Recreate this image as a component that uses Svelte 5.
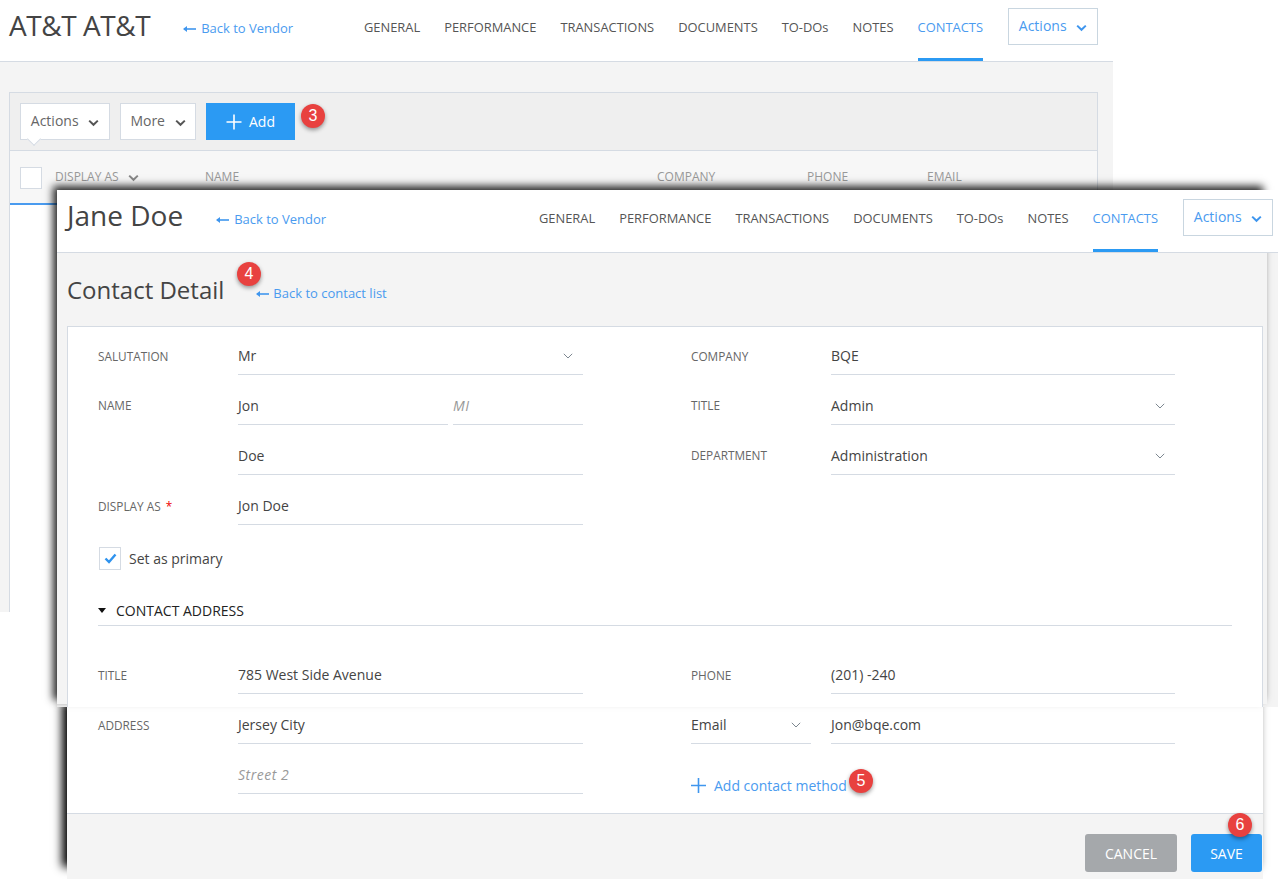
<script lang="ts">
  const tabs = ['General', 'Performance', 'Transactions', 'Documents', 'To-Dos', 'Notes', 'Contacts'];
</script>

{#snippet arrow()}
  <svg class="arrow" width="13" height="8" viewBox="0 0 13 8">
    <path d="M1 4h12" stroke="#3f96ee" stroke-width="1.6" fill="none" />
    <path d="M0 4l4-3v6z" fill="#3f96ee" />
  </svg>
{/snippet}

{#snippet chev(color = '#555')}
  <svg class="chev" width="11" height="8" viewBox="0 0 11 8">
    <path d="M1.2 1.6l4.3 4.2 4.3-4.2" stroke={color} stroke-width="2" fill="none" />
  </svg>
{/snippet}

{#snippet caret()}
  <svg class="caret" width="10" height="6" viewBox="0 0 10 6">
    <path d="M.8 .8l4.2 4.2 4.2-4.2" stroke="#7d8790" stroke-width="1" fill="none" />
  </svg>
{/snippet}

{#snippet header(title: string)}
  <header class="head">
    <h1>{title}</h1>
    <a class="back">{@render arrow()}Back to Vendor</a>
    <nav>
      {#each tabs as tab}
        <span class="tab" class:on={tab === 'Contacts'}>{tab === 'To-Dos' ? 'TO-DOs' : tab.toUpperCase()}</span>
      {/each}
    </nav>
    <button class="btn-actions">Actions {@render chev('#3f96ee')}</button>
  </header>
{/snippet}

{#snippet field(value: string, opts: { select?: boolean; hint?: boolean } = {})}
  <div class="field" class:hint={opts.hint}>
    <span>{value}</span>
    {#if opts.select}{@render caret()}{/if}
  </div>
{/snippet}

<main class="canvas">
  <section class="win-back">
    {@render header('AT&T AT&T')}
    <div class="list">
      <div class="toolbar">
        <button class="tool with-tip">Actions {@render chev()}</button>
        <button class="tool more">More {@render chev()}</button>
        <button class="add">
          <svg width="16" height="16" viewBox="0 0 16 16"><path d="M8 .5v15M.5 8h15" stroke="#fff" stroke-width="1.6" /></svg>
          Add
        </button>
        <span class="badge b3">3</span>
      </div>
      <div class="thead">
        <span class="box"></span>
        <span class="th c1">DISPLAY AS {@render chev('#888')}</span>
        <span class="th c2">NAME</span>
        <span class="th c3">COMPANY</span>
        <span class="th c4">PHONE</span>
        <span class="th c5">EMAIL</span>
      </div>
      <div class="active-line"></div>
    </div>
  </section>

  <section class="win-front">
    {@render header('Jane Doe')}
    <div class="title-row">
      <h2>Contact Detail</h2>
      <a class="back small">{@render arrow()}Back to contact list</a>
      <span class="badge b4">4</span>
    </div>
    <div class="panel">
      <div class="cols">
        <div class="col">
          <div class="row"><span class="lab">SALUTATION</span>{@render field('Mr', { select: true })}</div>
          <div class="row">
            <span class="lab up">NAME</span>
            <div class="split">
              {@render field('Jon')}
              {@render field('MI', { hint: true })}
            </div>
          </div>
          <div class="row"><span class="lab"></span>{@render field('Doe')}</div>
          <div class="row"><span class="lab">DISPLAY AS <i>*</i></span>{@render field('Jon Doe')}</div>
        </div>
        <div class="col">
          <div class="row"><span class="lab">COMPANY</span>{@render field('BQE')}</div>
          <div class="row"><span class="lab up">TITLE</span>{@render field('Admin', { select: true })}</div>
          <div class="row"><span class="lab up">DEPARTMENT</span>{@render field('Administration', { select: true })}</div>
        </div>
      </div>
      <label class="primary">
        <span class="check">
          <svg width="13" height="11" viewBox="0 0 13 11"><path d="M1.5 5.5l3.5 3.5 6.5-7.5" stroke="#2f93ee" stroke-width="2.4" fill="none" /></svg>
        </span>
        Set as primary
      </label>
      <div class="section">
        <svg width="8" height="5" viewBox="0 0 8 5"><path d="M0 0h8L4 5z" fill="#111" /></svg>
        CONTACT ADDRESS
      </div>
      <div class="cols">
        <div class="col"><div class="row"><span class="lab">TITLE</span>{@render field('785 West Side Avenue')}</div></div>
        <div class="col"><div class="row"><span class="lab">PHONE</span>{@render field('(201) -240')}</div></div>
      </div>
    </div>
  </section>

  <section class="win-foot">
    <div class="cols lower">
      <div class="col">
        <div class="row first"><span class="lab">ADDRESS</span>{@render field('Jersey City')}</div>
        <div class="row"><span class="lab"></span>{@render field('Street 2', { hint: true })}</div>
      </div>
      <div class="col">
        <div class="row first">
          <div class="field kind"><span>Email</span>{@render caret()}</div>
          <div class="gap"></div>
          {@render field('Jon@bqe.com')}
        </div>
        <a class="add-method">
          <svg width="15" height="15" viewBox="0 0 15 15"><path d="M7.5 0v15M0 7.5h15" stroke="#3f96ee" stroke-width="1.6" /></svg>
          Add contact method
          <span class="badge b5">5</span>
        </a>
      </div>
    </div>
    <footer>
      <button class="cancel">CANCEL</button>
      <button class="save">SAVE<span class="badge b6">6</span></button>
    </footer>
  </section>
</main>

<style>
  :global(body) {
    margin: 0;
    background: #fff;
  }

  .canvas {
    position: relative;
    width: 1278px;
    height: 879px;
    overflow: hidden;
    font-family: 'Open Sans', 'Liberation Sans', sans-serif;
    color: #444;
  }

  button {
    font-family: inherit;
    cursor: pointer;
  }

  .win-back {
    position: absolute;
    left: 0;
    top: 0;
    width: 1113px;
    height: 612px;
    background: #f4f4f4;
    overflow: hidden;
  }

  .win-front {
    position: absolute;
    z-index: 2;
    left: 57px;
    top: 190px;
    width: 1221px;
    height: 517px;
    background: #f4f4f4;
  }

  .win-front::before {
    content: '';
    position: absolute;
    z-index: -1;
    inset: 0 11px 3px 0;
    box-shadow: -4px -4px 8px rgba(0, 0, 0, 0.85);
  }

  .win-foot {
    position: absolute;
    z-index: 1;
    left: 67px;
    top: 707px;
    width: 1196px;
    height: 172px;
    background: #fff;
  }

  .win-foot::before {
    content: '';
    position: absolute;
    z-index: -1;
    inset: 0 0 7px 0;
    box-shadow: -5px -5px 9px #000;
  }

  .head {
    display: flex;
    align-items: flex-start;
    box-sizing: border-box;
    height: 62px;
    padding-left: 9px;
    background: #fff;
    border-bottom: 1px solid #d5dbe3;
  }

  .win-back .head {
    padding-right: 15px;
  }

  .win-front .head {
    height: 63px;
    padding-left: 10px;
    padding-right: 5px;
  }

  h1 {
    margin: 6px 0 0;
    font-size: 28px;
    line-height: 38px;
    font-weight: 400;
    color: #444;
    white-space: nowrap;
  }

  .win-back h1 {
    letter-spacing: -0.45px;
  }

  .back {
    display: inline-flex;
    align-items: center;
    gap: 5px;
    margin: 20px 0 0 33px;
    font-size: 13px;
    line-height: 18px;
    color: #4a9bef;
  }

  .win-back .back {
    margin-top: 19px;
  }

  .arrow {
    flex: none;
    margin-top: 1px;
  }

  nav {
    display: flex;
    gap: 24px;
    margin-left: auto;
    height: 100%;
  }

  .tab {
    box-sizing: border-box;
    height: 100%;
    padding-top: 18px;
    font-size: 12.9px;
    line-height: 18px;
    color: #555;
    white-space: nowrap;
    border-bottom: 3px solid transparent;
  }

  .win-front .tab {
    padding-top: 19px;
  }

  .tab.on {
    color: #4a9bef;
    border-bottom-color: #2b9af3;
  }

  .btn-actions {
    box-sizing: border-box;
    width: 90px;
    height: 37px;
    margin: 8px 0 0 25px;
    padding: 0 0 2px;
    font-size: 14px;
    color: #4a9bef;
    background: #fff;
    border: 1px solid #c9d6e0;
  }

  .win-front .btn-actions {
    margin-top: 9px;
  }

  .chev {
    margin-left: 6px;
    vertical-align: -1px;
  }

  .list {
    box-sizing: border-box;
    width: 1089px;
    height: 560px;
    margin: 30px 0 0 9px;
    background: #fff;
    border: 1px solid #d5dbe3;
    border-bottom: 0;
  }

  .toolbar {
    display: flex;
    align-items: flex-start;
    gap: 10px;
    box-sizing: border-box;
    height: 58px;
    padding: 10px;
    background: #efefef;
    border-bottom: 1px solid #d5dbe3;
  }

  .tool {
    position: relative;
    box-sizing: border-box;
    width: 90px;
    height: 37px;
    padding: 0 0 3px;
    font-size: 14px;
    color: #666;
    background: #fff;
    border: 1px solid #d5dbe3;
  }

  .tool.more {
    width: 76px;
  }

  .with-tip::after {
    content: '';
    position: absolute;
    left: 8px;
    bottom: -5px;
    width: 9px;
    height: 9px;
    background: #fff;
    border-right: 1px solid #d5dbe3;
    border-bottom: 1px solid #d5dbe3;
    transform: rotate(45deg);
  }

  .add {
    display: inline-flex;
    align-items: center;
    justify-content: center;
    gap: 7px;
    width: 89px;
    height: 37px;
    padding: 0;
    font-size: 14px;
    color: #fff;
    background: #2b9af3;
    border: 0;
  }

  .thead {
    position: relative;
    display: flex;
    align-items: center;
    height: 52px;
    background: #f7f7f7;
  }

  .box {
    position: absolute;
    left: 10px;
    top: 16px;
    box-sizing: border-box;
    width: 22px;
    height: 22px;
    background: #fff;
    border: 1px solid #d5dbe3;
  }

  .th {
    position: absolute;
    top: 17px;
    font-size: 12px;
    line-height: 18px;
    color: #999;
    white-space: nowrap;
  }

  .c1 { left: 45px; }
  .c2 { left: 195px; }
  .c3 { left: 647px; }
  .c4 { left: 797px; }
  .c5 { left: 917px; }

  .active-line {
    height: 2px;
    background: #4a9bef;
  }

  .badge {
    position: absolute;
    box-sizing: border-box;
    width: 24px;
    height: 24px;
    font-family: 'Liberation Sans', Arial, sans-serif;
    font-size: 16px;
    line-height: 23px;
    text-align: center;
    color: #fff;
    background: #e8413f;
    border-radius: 50%;
    box-shadow: 0 2px 4px rgba(0, 0, 0, 0.4);
  }

  .b3 { left: 301px; top: 104px; }
  .b4 { left: 180px; top: 9px; }
  .b5 { left: 158px; top: -7px; }
  .b6 { left: 37px; top: -21px; }

  .title-row {
    position: relative;
    display: flex;
    align-items: flex-start;
    height: 73px;
    padding-left: 10px;
  }

  h2 {
    margin: 20px 0 0;
    font-size: 24px;
    line-height: 33px;
    font-weight: 400;
    color: #444;
  }

  .back.small {
    gap: 4px;
    margin: 31px 0 0 32px;
  }

  .panel {
    box-sizing: border-box;
    width: 1196px;
    height: 381px;
    margin-left: 10px;
    padding: 10px 30px 0;
    overflow: hidden;
    background: #fff;
    border: 1px solid #d5dbe3;
    border-bottom: 0;
  }

  .cols {
    display: grid;
    grid-template-columns: 485px 484px;
    column-gap: 108px;
  }

  .lower {
    padding-left: 31px;
  }

  .col {
    display: flex;
    flex-direction: column;
    gap: 12px;
  }

  .row {
    display: flex;
    align-items: center;
    height: 38px;
  }

  .row.first {
    height: 37px;
  }

  .row.first .field {
    padding-bottom: 1px;
  }

  .lab {
    flex: none;
    width: 140px;
    font-size: 11.8px;
    color: #666;
    white-space: nowrap;
  }

  .lab.up,
  .row.first .lab {
    padding-bottom: 2px;
  }

  .lab i {
    margin-left: 2px;
    font-style: normal;
    color: #e00;
  }

  .field {
    display: flex;
    flex: 1;
    align-items: center;
    justify-content: space-between;
    box-sizing: border-box;
    height: 100%;
    padding-right: 10px;
    font-size: 14px;
    color: #444;
    border-bottom: 1px solid #d5dbe3;
  }

  .field.hint {
    font-style: italic;
    letter-spacing: 0.5px;
    color: #999;
  }

  .caret {
    flex: none;
    margin-top: 1px;
  }

  .split {
    display: grid;
    flex: 1;
    grid-template-columns: 210px 130px;
    gap: 5px;
    height: 100%;
  }

  .kind {
    flex: none;
    width: 120px;
  }

  .gap {
    flex: none;
    width: 20px;
  }

  .primary {
    display: flex;
    align-items: center;
    gap: 8px;
    height: 24px;
    margin: 21px 0 0 1px;
    font-size: 14px;
    color: #444;
  }

  .check {
    display: grid;
    place-items: center;
    box-sizing: border-box;
    width: 22px;
    height: 23px;
    background: #fff;
    border: 1px solid #d5dbe3;
  }

  .section {
    display: flex;
    align-items: center;
    gap: 10px;
    height: 30px;
    margin-top: 25px;
    font-size: 14px;
    color: #222;
    border-bottom: 1px solid #d5dbe3;
  }

  .section + .cols {
    margin-top: 30px;
  }

  .add-method {
    position: relative;
    display: flex;
    align-items: center;
    gap: 8px;
    height: 18px;
    margin-top: 20px;
    font-size: 14px;
    color: #4a9bef;
    white-space: nowrap;
  }

  footer {
    display: flex;
    justify-content: flex-end;
    gap: 14px;
    box-sizing: border-box;
    height: 66px;
    margin-top: 19px;
    padding: 20px 1px 0 0;
    background: #f4f4f4;
    border-top: 1px solid #d5dbe3;
  }

  footer button {
    position: relative;
    height: 38px;
    padding: 0;
    font-size: 14px;
    color: #fff;
    border: 0;
    border-radius: 3px;
  }

  .cancel {
    width: 92px;
    background: #a5a8ab;
  }

  .save {
    width: 71px;
    background: #2b9af3;
  }
</style>
